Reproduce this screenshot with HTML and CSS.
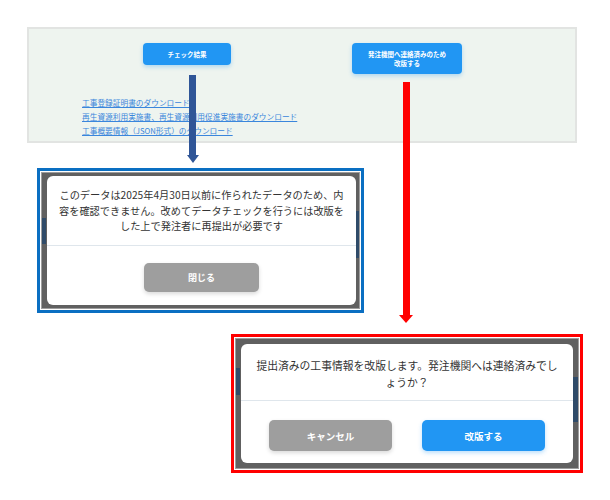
FILE: index.html
```html
<!DOCTYPE html>
<html lang="ja">
<head>
<meta charset="utf-8">
<title>改版フロー</title>
<link rel="stylesheet" href="styles.css">
</head>
<body>
<div class="page">
  <section class="panel">
    <div class="actions">
      <button class="btn-top btn-check">チェック結果</button>
      <button class="btn-top btn-revise">発注機関へ連絡済みのため<br>改版する</button>
    </div>
    <ul class="links">
      <li><a href="#">工事登録証明書のダウンロード</a></li>
      <li><a href="#">再生資源利用実施書、再生資源利用促進実施書のダウンロード</a></li>
      <li><a href="#">工事概要情報（JSON形式）のダウンロード</a></li>
    </ul>
  </section>

  <div class="shot shot-blue">
    <div class="overlay overlay-1">
      <span class="ghost g1l"></span>
      <span class="ghost g1r"></span>
      <div class="dialog dialog-1">
        <p class="msg">このデータは2025年4月30日以前に作られたデータのため、内<br>容を確認できません。改めてデータチェックを行うには改版を<br>した上で発注者に再提出が必要です</p>
        <div class="foot">
          <button class="dbtn gray">閉じる</button>
        </div>
      </div>
    </div>
  </div>

  <div class="shot shot-red">
    <div class="overlay overlay-2">
      <span class="ghost g2l"></span>
      <span class="ghost g2r"></span>
      <div class="dialog dialog-2">
        <p class="msg">提出済みの工事情報を改版します。発注機関へは連絡済みでし<br>ょうか？</p>
        <div class="foot">
          <button class="dbtn gray">キャンセル</button>
          <button class="dbtn blue">改版する</button>
        </div>
      </div>
    </div>
  </div>

  <svg class="arrow arrow-blue" width="12" height="88" viewBox="0 0 12 88">
    <rect x="2" y="0" width="7" height="81" fill="#2f5597"/>
    <polygon points="0,80 12,80 6,88" fill="#2f5597"/>
  </svg>
  <svg class="arrow arrow-red" width="14" height="241" viewBox="0 0 14 241">
    <rect x="4" y="0" width="7" height="234" fill="#ff0000"/>
    <polygon points="0,233 14,233 7,241" fill="#ff0000"/>
  </svg>
</div>
</body>
</html>
```
FILE: styles.css
```css
* { box-sizing: border-box; }
html, body { margin: 0; padding: 0; background: #ffffff; }
body {
  font-family: "Noto Sans CJK JP", "Noto Sans", sans-serif;
  color: #333333;
}
.page {
  position: relative;
  width: 610px;
  height: 500px;
  padding-top: 27px;
  overflow: hidden;
}

/* top panel */
.panel {
  margin-left: 27px;
  width: 550px;
  height: 116px;
  background: #eef4ef;
  border: 2px solid #e2e4e2;
  padding: 14px 0 0 0;
}
.actions {
  display: flex;
  align-items: flex-start;
  padding-left: 114px;
  gap: 121px;
}
.btn-top {
  border: none;
  background: #2196f3;
  color: #ffffff;
  font-family: "Noto Sans CJK JP", sans-serif;
  font-weight: 700;
  font-size: 6.5px;
  line-height: 9px;
  border-radius: 4px;
  box-shadow: 0 2px 4px rgba(33, 150, 243, 0.3);
  padding: 0;
}
.btn-check { width: 88px; height: 22px; }
.btn-revise { width: 110px; height: 31px; }
.links {
  list-style: none;
  margin: 22px 0 0 0;
  padding: 0 0 0 53px;
  font-size: 7.7px;
  line-height: 14px;
}
.links a {
  color: #3a86dc;
  text-decoration: underline;
}

/* dialog screenshots */
.shot {
  background: #ffffff;
  padding: 1px;
}
.shot-blue {
  margin: 25px 0 0 37px;
  width: 327px;
  height: 145px;
  border: 3px solid #0a6fc2;
}
.shot-red {
  margin: 21px 0 0 231px;
  width: 352px;
  height: 139px;
  border: 3px solid #ff0000;
}
.overlay {
  position: relative;
  height: 100%;
  background: #606060;
  border: 1px solid #9d9d9d;
  display: flex;
  align-items: flex-start;
}
.overlay-1 { padding: 3px 3px 3px 5px; }
.overlay-2 { padding: 5px; }
.ghost {
  position: absolute;
  background: #23466c;
  opacity: 0.8;
}
.g1l { left: 0; top: 45px; width: 4px; height: 26px; }
.g1r { right: 0; top: 38px; width: 3px; height: 47px; }
.g2l { left: 0; top: 29px; width: 4px; height: 27px; }
.g2r { right: 0; top: 38px; width: 5px; height: 45px; }

.dialog {
  position: relative;
  background: #ffffff;
  border-radius: 6px;
  display: flex;
  flex-direction: column;
}
.dialog-1 { width: 310px; height: 129px; }
.dialog-2 { width: 332px; height: 119px; }
.msg {
  margin: 0;
  text-align: center;
  white-space: nowrap;
  color: #333333;
  border-bottom: 1px solid #dfe6ec;
}
.dialog-1 .msg {
  font-size: 10.2px;
  line-height: 15.5px;
  padding: 11px 0 11px;
}
.dialog-2 .msg {
  font-size: 10.8px;
  line-height: 17px;
  padding: 12.5px 0 9.5px;
}
.foot {
  display: flex;
  justify-content: center;
  gap: 30px;
}
.dialog-1 .foot { padding-top: 17px; }
.dialog-2 .foot { padding-top: 19px; }
.dbtn {
  border: none;
  color: #ffffff;
  font-family: "Noto Sans CJK JP", sans-serif;
  font-weight: 700;
  border-radius: 5px;
  padding: 0;
  box-shadow: 0 2px 4px rgba(0, 0, 0, 0.15);
}
.dialog-1 .dbtn { width: 115px; height: 29px; font-size: 9px; }
.dialog-2 .dbtn { width: 123px; height: 31px; font-size: 9.5px; }
.dbtn.gray { background: #9e9e9e; }
.dbtn.blue { background: #2196f3; box-shadow: 0 2px 4px rgba(33, 150, 243, 0.3); }

/* arrows drawn over the content */
.arrow { position: absolute; display: block; }
.arrow-blue { left: 187px; top: 75px; }
.arrow-red { left: 399px; top: 82px; }
```
